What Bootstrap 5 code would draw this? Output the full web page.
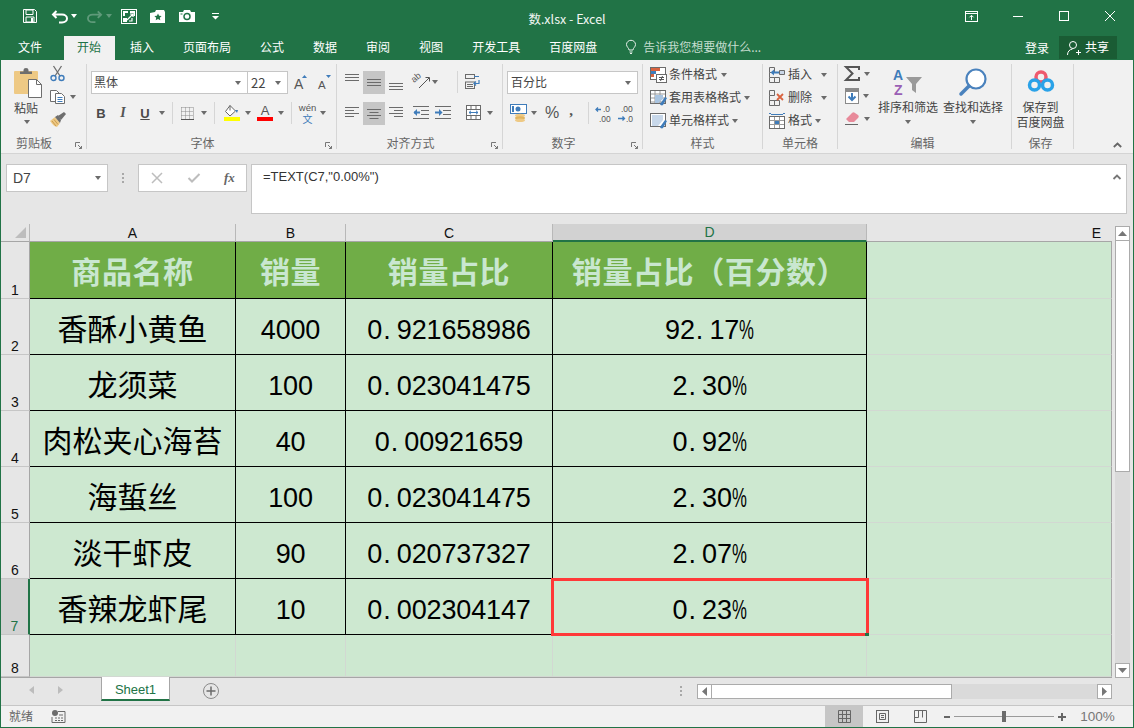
<!DOCTYPE html>
<html lang="zh-CN">
<head>
<meta charset="utf-8">
<title>数.xlsx - Excel</title>
<link href="https://cdn.jsdelivr.net/npm/bootstrap@5.3.0/dist/css/bootstrap.min.css" rel="stylesheet">
<style>
html,body{margin:0;height:728px;overflow:hidden;background:#e6e6e6}
body{font-family:"Noto Sans CJK SC","Liberation Sans",sans-serif;font-size:12px;line-height:1.2;color:#444}
svg{display:block;flex-shrink:0;overflow:visible}
.xl-win{width:1134px;height:728px;border:1px solid #217346;border-top:0;display:flex;flex-direction:column;background:#e6e6e6;overflow:hidden}
.ml1{margin-left:1px}.ml2{margin-left:2px}.ml3{margin-left:3px}.ml4{margin-left:4px}.ml5{margin-left:5px}.ml6{margin-left:6px}.ml7{margin-left:7px}.ml8{margin-left:8px}.ml9{margin-left:9px}.ml10{margin-left:10px}.ml11{margin-left:11px}.ml12{margin-left:12px}.ml13{margin-left:13px}.ml14{margin-left:14px}.ml15{margin-left:15px}.ml17{margin-left:17px}.ml19{margin-left:19px}.ml22{margin-left:22px}
.mt1{margin-top:1px}.mt2{margin-top:2px}.mt3{margin-top:3px}.mt4{margin-top:4px}.mt5{margin-top:5px}.mt6{margin-top:6px}.mt7{margin-top:7px}.mt8{margin-top:8px}.mt9{margin-top:9px}.mt10{margin-top:10px}
.xl-tri{width:0;height:0;border-left:3.5px solid transparent;border-right:3.5px solid transparent;border-top:4px solid #6b6b6b;flex-shrink:0}
.xl-title{height:36px;background:#217346;color:#fff;flex-shrink:0;margin-left:-1px;margin-right:-1px;padding-bottom:4px}
.xl-side{flex:1 1 0;min-width:0}
.xl-doc{font-size:12.5px;color:#f2f7f4;margin-top:4px}
.xl-tabs{height:24px;background:#217346;color:#fff;flex-shrink:0;margin-left:-1px;margin-right:-1px}
.xl-tabs .nav-link{padding:0 14px 0 13px;margin-right:2px;height:24px;line-height:22px;color:#fff;font-size:12px;border-radius:0}
.xl-tabs .nav-link.xl-on{background:#f1f1f1;color:#217346}
.xl-tabs .xl-first{margin-left:5px;margin-right:8px}
.xl-tell{color:#c5ddcf;margin-left:13px}
.xl-share{height:23px;width:58px;background:#1a5c34;color:#fff;margin-left:10px;margin-right:17px}
.xl-ribbon{height:94px;background:#f1f1f1;border-bottom:1px solid #d4d4d4;padding-top:4px;flex-shrink:0}
.xl-grp{height:85px;border-right:1px solid #d6d6d6;display:flex;flex-direction:column;position:relative;flex-shrink:0}
.xl-g1{width:86px}.xl-g2{width:250px}.xl-g3{width:166px}.xl-g4{width:140px}.xl-g5{width:120px}.xl-g6{width:75px}.xl-g7{width:174px}.xl-g8{width:62px;padding-right:4px}
.xl-gbody{height:71px;display:flex}
.xl-glabel{height:14px;line-height:16px;text-align:center;color:#666;font-size:12px}
.xl-lb1{padding-right:19px}.xl-lb2{padding-right:18px}.xl-lb3{padding-right:18px}.xl-lb4{padding-right:18px}.xl-lb7{padding-right:4px}
.xl-launch{position:absolute;right:4px;bottom:0}
.xl-combo{height:23px;background:#fff;border:1px solid #c6c6c6;display:flex;align-items:center;justify-content:space-between;font-size:12px;color:#444;padding:0 6px 0 2px}
.xl-font{width:157px}.xl-size{width:41px;margin-left:-1px;padding-left:3px}.xl-fmt{width:131px;padding-left:3px}
.xl-sepv{width:1px;height:22px;background:#d6d6d6;flex-shrink:0}
.xl-b{font:700 13px "Liberation Sans",sans-serif;width:12px;text-align:center;color:#4a4a4a}
.xl-i{font:italic 700 14px "Liberation Serif",serif;width:12px;text-align:center;color:#555}
.xl-u{font:700 13px "Liberation Sans",sans-serif;width:12px;text-align:center;color:#4a4a4a;text-decoration:underline}
.xl-hi{width:22px;height:23px;background:#c6c6c6;display:flex;align-items:center;justify-content:center}
.xl-line{height:23px;align-items:center;display:flex;white-space:nowrap;color:#444}
.xl-bigbtn{width:60px;display:flex;flex-direction:column;align-items:center;white-space:nowrap;color:#444}
.xl-svgt{font-family:"Liberation Sans",sans-serif}
.xl-fbar{height:70px;padding:10px 5px 0 5px;flex-shrink:0;align-items:flex-start}
.xl-name{width:102px;height:28px;background:#fff;border:1px solid #c6c6c6;padding:0 6px;font:14px "Liberation Sans",sans-serif;color:#444}
.xl-fbtns{width:109px;height:28px;background:#fff;border:1px solid #c6c6c6}
.xl-finput{width:876px;height:50px;margin-left:4px;background:#fff;border:1px solid #c6c6c6;padding:4px 4px 0 11px;font:13px "Liberation Sans",sans-serif;color:#333;position:relative}
.xl-body{height:454px;flex-shrink:0;overflow:hidden}
.xl-wrap{width:1111px;height:454px;overflow:hidden;border-bottom:1px solid #a6a6a6;flex-shrink:0}
.table.xl-sheet{margin:0;width:1111px;table-layout:fixed;border-collapse:separate;border-spacing:0;--bs-table-bg:transparent;--bs-table-color:#000;--bs-border-width:0}
.table.xl-sheet td,.table.xl-sheet th{padding:0;box-shadow:none;text-align:center;vertical-align:middle;font-weight:400;white-space:nowrap;overflow:visible}
.table.xl-sheet .xl-ch{height:18px;background:#e6e6e6;border-right:1px solid #b8b8b8;border-bottom:1px solid #a6a6a6;font:14px "Liberation Sans",sans-serif;color:#111;line-height:16px}
.table.xl-sheet .xl-ch.xl-sel{background:#d2d2d2;color:#217346;border-bottom:2px solid #217346}
.table.xl-sheet .xl-ch.xl-e{border-right:0;text-align:right;padding-right:11px;background:#e6e6e6}
.table.xl-sheet .xl-corner{position:relative;text-align:left;padding-left:14px}
.table.xl-sheet .xl-rh{background:#e6e6e6;border-right:1px solid #a6a6a6;border-bottom:1px solid #c6c6c6;font:14px "Liberation Sans",sans-serif;color:#111;vertical-align:bottom;line-height:15px}
.table.xl-sheet .xl-rh.xl-sel{background:#d2d2d2;color:#217346;border-right:2px solid #217346}
.table.xl-sheet .xl-d,.table.xl-sheet .xl-h{background:#cde8d0;border-right:1px solid #000;border-bottom:1px solid #000;font-family:"Noto Sans CJK SC",sans-serif;font-size:30px;line-height:34px;color:#000}
.table.xl-sheet .xl-h{background:#70ad47;color:#c9e7d0;font-weight:700;letter-spacing:.6px}
.table.xl-sheet .xl-n{font-family:"Liberation Sans",sans-serif;font-size:27px;letter-spacing:-.15px;padding-top:7px}
.xl-dot{display:inline-block;width:14.67px;text-align:left;padding-left:1px}
.xl-pc{display:inline-block;width:14.67px;transform:scaleX(.62);transform-origin:left center;text-align:left}
.table.xl-sheet .xl-g{background:#cde8d0;border-right:1px solid #d2d8d2;border-bottom:1px solid #d2d8d2}
.table.xl-sheet .xl-ge{background:#cde8d0;border-right:1px solid #a6a6a6;border-bottom:1px solid #d2d8d2}
.xl-r1{height:57px}.xl-rn{height:56px}.xl-r8{height:42px}
.xl-frame{position:absolute;left:-2px;right:-3px;top:-1px;bottom:-2px;border:3px solid #ff3838;pointer-events:none}
.xl-handle{position:absolute;right:-3px;bottom:-3px;width:4px;height:3px;background:#217346}
.xl-vs{width:21px;padding-left:3px;height:454px}
.xl-sb{width:15px;height:15px;background:#fff;border:1px solid #ababab;display:flex;align-items:center;justify-content:center;flex-shrink:0}
.xl-vthumb{width:15px;height:231px;background:#fff;border:1px solid #ababab;border-top:0}
.xl-vtrack{width:15px;flex:1;background:#dadada}
.xl-stabs{height:28px;flex-shrink:0;border-bottom:1px solid #c6c6c6}
.xl-tabb{width:69px;height:24px;background:#fff;border-bottom:2px solid #217346;border-left:1px solid #a6a6a6;border-right:1px solid #a6a6a6;margin-top:-1px;color:#217346;font:13px "Liberation Sans",sans-serif;line-height:25px;text-align:center}
.xl-hs{width:415px;height:15px;margin-top:6px}
.xl-hthumb{width:240px;height:15px;background:#fff;border:1px solid #ababab;border-left:0}
.xl-htrack{flex:1;background:#dadada;height:15px}
.xl-status{height:21px;background:#f1f1f1;flex-shrink:0;color:#666}
.xl-vbtn{width:38px;height:21px;display:flex;align-items:center;justify-content:center}
.xl-vbtn.xl-on{background:#c6c6c6}
.xl-zoomline{width:100px;height:1px;background:#9a9a9a;position:relative}
.xl-zoomk{position:absolute;left:48px;top:-5px;width:4px;height:11px;background:#6b6b6b}
.xl-pct{font:13.5px "Liberation Sans",sans-serif;color:#777;width:43px;text-align:center;margin-right:14px}
</style>
</head>
<body>
<div class="xl-win">

<!-- title bar -->
<div class="xl-title d-flex align-items-center">
  <div class="xl-side d-flex align-items-center">
    <svg style="margin-left:23px" width="14" height="14" viewBox="0 0 14 14"><path d="M.5.5h11l2 2v11H.5z" fill="none" stroke="#fff"/><path d="M3 1h7v4.5H3zM3 8h8v5H3z" fill="none" stroke="#fff"/><path d="M8 9h2v4H8z" fill="#fff"/></svg>
    <svg class="ml15" width="16" height="13" viewBox="0 0 16 13"><path d="M1 4.5h9c3 0 5 1.800 5 4s-2 4-5 4H7M4.500 1 1 4.500 4.500 8" fill="none" stroke="#fff" stroke-width="2"/></svg>
    <span class="xl-tri ml3" style="border-top-color:#fff"></span>
    <svg class="ml10" width="15" height="13" viewBox="0 0 16 13"><path d="M15 4.500H6c-3 0-5 1.800-5 4s2 4 5 4h3M11.500 1 15 4.500 11.500 8" fill="none" stroke="#5f9a7a" stroke-width="2"/></svg>
    <span class="xl-tri ml4" style="border-top-color:#5f9a7a"></span>
    <svg class="ml9" width="16" height="15" viewBox="0 0 16 15"><rect x=".5" y=".5" width="15" height="14" fill="none" stroke="#fff"/><path d="M2 2h5v2H4v3H2zM9 2h5v5h-1.500V4H9zM2 9h4v4H2z" fill="#fff"/><path d="M6 11l6-6M9 5h3v3M11 9v3H8" fill="none" stroke="#fff" stroke-width="1.200"/></svg>
    <svg class="ml13" width="16" height="13" viewBox="0 0 16 13"><path d="M0 3l5-1 1-2h8l1 2v11H0z" fill="#fff"/><path d="M8 3.500l1.100 2.300 2.500.3-1.800 1.700.5 2.500L8 9.100 5.700 10.300l.5-2.500L4.400 6.100l2.500-.3z" fill="#217346"/></svg>
    <svg class="ml13" width="16" height="12" viewBox="0 0 16 12"><path d="M0 2h4l1-2h6l1 2h4v10H0z" fill="#fff"/><circle cx="8" cy="6.500" r="3" fill="none" stroke="#217346" stroke-width="1.500"/><path d="M1.500 3.500h2v1h-2z" fill="#217346"/></svg>
    <svg class="ml17" width="7" height="7" viewBox="0 0 7 7"><path d="M0 0h7v1H0z M0 3h7L3.500 6.500z" fill="#fff"/></svg>
  </div>
  <div class="xl-doc">数.xlsx - Excel</div>
  <div class="xl-side d-flex align-items-center justify-content-end">
    <svg width="13" height="11" viewBox="0 0 13 11"><rect x=".5" y=".5" width="12" height="10" fill="none" stroke="#fff"/><path d="M.5 2.500h12M6.500 9V4.500M4.500 6.300l2-2 2 2" fill="none" stroke="#fff"/></svg>
    <svg style="margin-left:35px" width="10" height="1" viewBox="0 0 10 1"><path d="M0 .5h10" stroke="#fff"/></svg>
    <svg style="margin-left:36px" width="10" height="10" viewBox="0 0 10 10"><rect x=".5" y=".5" width="9" height="9" fill="none" stroke="#fff"/></svg>
    <svg style="margin-left:36px;margin-right:19px" width="10" height="10" viewBox="0 0 10 10"><path d="M0 0l10 10M10 0L0 10" stroke="#fff"/></svg>
  </div>
</div>

<!-- ribbon tabs -->
<div class="xl-tabs d-flex">
  <ul class="nav flex-nowrap">
    <li class="nav-item"><a class="nav-link xl-first" href="#">文件</a></li>
    <li class="nav-item"><a class="nav-link xl-on" href="#">开始</a></li>
    <li class="nav-item"><a class="nav-link" href="#">插入</a></li>
    <li class="nav-item"><a class="nav-link" href="#">页面布局</a></li>
    <li class="nav-item"><a class="nav-link" href="#">公式</a></li>
    <li class="nav-item"><a class="nav-link" href="#">数据</a></li>
    <li class="nav-item"><a class="nav-link" href="#">审阅</a></li>
    <li class="nav-item"><a class="nav-link" href="#">视图</a></li>
    <li class="nav-item"><a class="nav-link" href="#">开发工具</a></li>
    <li class="nav-item"><a class="nav-link" href="#">百度网盘</a></li>
  </ul>
  <div class="d-flex align-items-center xl-tell" style="height:22px">
    <svg width="10" height="14" viewBox="0 0 10 14"><path d="M3 10C3 8 .5 7 .5 4.500a4.500 4.200 0 0 1 9 0C9.500 7 7 8 7 10zM3.500 12h3M4 13.500h2" fill="none" stroke="#e6f0ea"/></svg>
    <span class="ml7">告诉我您想要做什么...</span>
  </div>
  <div class="ms-auto d-flex align-items-start">
    <span class="mt4" style="line-height:15px">登录</span>
    <div class="xl-share d-flex align-items-center justify-content-center">
      <svg width="14" height="14" viewBox="0 0 14 14"><circle cx="6" cy="4" r="3.500" fill="none" stroke="#fff"/><path d="M.5 14c0-3.500 2-5.500 5-6M9 11.500h5M11.500 9v5" fill="none" stroke="#fff"/></svg>
      <span class="ml4">共享</span>
    </div>
  </div>
</div>

<!-- ribbon -->
<div class="xl-ribbon d-flex">
  <!-- clipboard -->
  <div class="xl-grp xl-g1">
    <div class="xl-gbody">
      <div class="d-flex flex-column ml13 mt4" style="width:28px">
        <svg width="28" height="30" viewBox="0 0 28 30"><path d="M1 3h22a1 1 0 0 1 1 1v21a1 1 0 0 1-1 1H1a1 1 0 0 1-1-1V4a1 1 0 0 1 1-1z" fill="#eec984"/><path d="M6 6V3.500h3.500V2a2.500 2 0 0 1 5 0v1.500H18V6z" fill="#6e6e6e"/><path d="M14.500 11.500h8l5 5v13h-13z" fill="#fff" stroke="#6e6e6e"/><path d="M22.500 11.500v5h5" fill="none" stroke="#6e6e6e"/></svg>
        <span class="mt3" style="line-height:14px">粘贴</span>
        <span class="xl-tri mt5 ml10"></span>
      </div>
      <div class="d-flex flex-column ml8">
        <svg class="mt2" width="15" height="15" viewBox="0 0 15 15"><path d="M3.500 0l6.500 10M11.500 0L5 10" stroke="#6e6e6e" stroke-width="1.300" fill="none"/><circle cx="3.500" cy="12" r="2.500" fill="none" stroke="#3f7cba" stroke-width="1.400"/><circle cx="11.500" cy="12" r="2.500" fill="none" stroke="#3f7cba" stroke-width="1.400"/></svg>
        <div class="d-flex align-items-center mt9">
          <svg width="15" height="14" viewBox="0 0 15 14"><path d="M.5.500h6l3 3v8H.5z" fill="#fff" stroke="#6e6e6e"/><path d="M5.500 3.500h6l3 3v7h-9z" fill="#fff" stroke="#6e6e6e"/><path d="M7.500 7.500h5M7.500 9.500h5M7.500 11.500h5" stroke="#3f7cba"/></svg>
          <span class="xl-tri ml5"></span>
        </div>
        <svg class="mt8" width="16" height="15" viewBox="0 0 16 15"><path d="M0 9l5-4 5 6-3 4c-2 0-5-3-7-6z" fill="#eec984"/><path d="M5 5l3-2 3 5-1 3z" fill="#6e6e6e"/><path d="M8 4l6-4 2 2-5 6z" fill="#6e6e6e"/><path d="M2 9l4 5M4 7.500l4 5" stroke="#c99b50" fill="none"/></svg>
      </div>
    </div>
    <div class="xl-glabel xl-lb1">剪贴板</div>
    <svg class="xl-launch" width="7" height="7" viewBox="0 0 7 7"><path d="M.5 5V.5H5M3 3l3.500 3.500M6.500 4v2.500H4" fill="none" stroke="#777"/></svg>
  </div>

  <!-- font -->
  <div class="xl-grp xl-g2">
    <div class="xl-gbody flex-column">
      <div class="d-flex align-items-center mt7">
        <div class="xl-combo xl-font ml4"><span>黑体</span><span class="xl-tri"></span></div>
        <div class="xl-combo xl-size"><span style="font-size:13px">22</span><span class="xl-tri"></span></div>
        <svg class="ml6" width="13" height="17" viewBox="0 0 13 17"><text class="xl-svgt" x="0" y="15" font-size="14" fill="#555">A</text><path d="M8 4l2.500-3L13 4z" fill="#3f7cba"/></svg>
        <svg class="ml11" width="13" height="17" viewBox="0 0 13 17"><text class="xl-svgt" x="0" y="15" font-size="11.500" fill="#555">A</text><path d="M8 1l2.500 3L13 1z" fill="#3f7cba"/></svg>
      </div>
      <div class="d-flex align-items-center mt8">
        <span class="xl-b ml8">B</span><span class="xl-i ml10">I</span><span class="xl-u ml10">U</span>
        <span class="xl-tri ml8"></span>
        <span class="xl-sepv ml7"></span>
        <svg class="ml8" width="13" height="13" viewBox="0 0 13 13"><path d="M.5.500h12M.5 4.500h12M.5 8.500h12M.5.500v12M4.500.500v12M8.500.500v12M12.500.500v12" stroke="#8a8a8a" stroke-dasharray="1 1" fill="none"/><path d="M0 12.500h13" stroke="#555"/></svg>
        <span class="xl-tri ml7"></span>
        <span class="xl-sepv ml7"></span>
        <div class="d-flex flex-column ml9"><svg width="16" height="12" viewBox="0 0 16 12"><path d="M6 .5l5.500 5.500L6 11 1.500 6.500z" fill="#fff" stroke="#666"/><path d="M6 .5v5" stroke="#666"/><path d="M11 5h3l-1 3z" fill="#3f7cba"/></svg><span style="width:16px;height:4px;background:#ffff00;display:block"></span></div>
        <span class="xl-tri ml5"></span>
        <div class="d-flex flex-column ml6" style="width:16px"><span style="font:13px/12px 'Liberation Sans',sans-serif;text-align:center;color:#555;height:12px">A</span><span style="width:16px;height:4px;background:#ff0000;display:block"></span></div>
        <span class="xl-tri ml5"></span>
        <span class="xl-sepv ml7"></span>
        <div class="d-flex flex-column align-items-center ml8" style="width:15px"><span style="font:9.500px/10px 'Liberation Sans',sans-serif;color:#555">wén</span><span style="font-size:10px;line-height:11px;color:#3f7cba">文</span></div>
        <span class="xl-tri ml5"></span>
      </div>
    </div>
    <div class="xl-glabel xl-lb2">字体</div>
    <svg class="xl-launch" width="7" height="7" viewBox="0 0 7 7"><path d="M.5 5V.5H5M3 3l3.500 3.500M6.500 4v2.500H4" fill="none" stroke="#777"/></svg>
  </div>

  <!-- alignment -->
  <div class="xl-grp xl-g3">
    <div class="xl-gbody flex-column">
      <div class="d-flex align-items-start mt7">
        <svg class="ml8 mt3" width="14" height="8" viewBox="0 0 14 8"><path d="M0 .5h14M0 3.500h14M0 6.500h14" stroke="#6b6b6b"/></svg>
        <div class="xl-hi ml4"><svg width="14" height="8" viewBox="0 0 14 8"><path d="M0 .5h14M0 3.500h14M0 6.500h14" stroke="#6b6b6b"/></svg></div>
        <svg class="ml4" style="margin-top:12px" width="14" height="8" viewBox="0 0 14 8"><path d="M0 .5h14M0 3.500h14M0 6.500h14" stroke="#6b6b6b"/></svg>
        <svg class="ml10 mt3" width="18" height="15" viewBox="0 0 18 15"><text class="xl-svgt" x="0" y="0" font-size="9" fill="#555" transform="translate(1 9) rotate(-40)">ab</text><path d="M6 14L16 4M12.500 3.500H16.500V7.500" stroke="#555" fill="none"/></svg>
        <span class="xl-tri ml1 mt9"></span>
        <span class="xl-sepv ml19"></span>
        <svg class="ml7 mt3" width="15" height="15" viewBox="0 0 15 15"><rect x=".5" y=".5" width="9" height="4" fill="none" stroke="#6b6b6b"/><rect x=".5" y="8" width="9" height="6.500" fill="none" stroke="#6b6b6b"/><path d="M2 10.500h6M2 12.500h6" stroke="#6b6b6b"/><path d="M9 2.500h5M14 6v3.500h-5M11 7.500l-2 2 2 2" fill="none" stroke="#3f7cba" stroke-width="1.200"/></svg>
      </div>
      <div class="d-flex align-items-start mt8">
        <svg class="ml8" style="margin-top:5px" width="14" height="10" viewBox="0 0 14 10"><path d="M0 .5h14M0 3.500h9M0 6.500h14M0 9.500h9" stroke="#6b6b6b"/></svg>
        <div class="xl-hi ml4"><svg width="14" height="10" viewBox="0 0 14 10"><path d="M0 .5h14M2.500 3.500h9M0 6.500h14M2.500 9.500h9" stroke="#6b6b6b"/></svg></div>
        <svg class="ml4" style="margin-top:5px" width="14" height="10" viewBox="0 0 14 10"><path d="M0 .5h14M5 3.500h9M0 6.500h14M5 9.500h9" stroke="#6b6b6b"/></svg>
        <svg class="ml10" style="margin-top:4px" width="16" height="13" viewBox="0 0 16 13"><path d="M0 .5h16M8 4.500h8M8 8.500h8M0 12.500h16" stroke="#6b6b6b"/><path d="M1 6.500h6" stroke="#3f7cba" stroke-width="2"/><path d="M4 3L.5 6.500 4 10z" fill="#3f7cba"/></svg>
        <svg class="ml6" style="margin-top:4px" width="16" height="13" viewBox="0 0 16 13"><path d="M0 .5h16M8 4.500h8M8 8.500h8M0 12.500h16" stroke="#6b6b6b"/><path d="M0 6.500h5" stroke="#3f7cba" stroke-width="2"/><path d="M4 3l3.500 3.500L4 10z" fill="#3f7cba"/></svg>
        <svg class="ml15" style="margin-top:3px" width="15" height="15" viewBox="0 0 15 15"><rect x=".5" y=".5" width="14" height="14" fill="#fff" stroke="#6b6b6b"/><path d="M.5 4.500h14M.5 10.500h14M5 .500v4M10 .500v4M5 10.500v4M10 10.500v4" stroke="#6b6b6b"/><path d="M3 7.500h9M5 5.800L3 7.500l2 1.700M10 5.800l2 1.700-2 1.700" fill="none" stroke="#3f7cba"/></svg>
        <span class="xl-tri ml6 mt9"></span>
      </div>
    </div>
    <div class="xl-glabel xl-lb3">对齐方式</div>
    <svg class="xl-launch" width="7" height="7" viewBox="0 0 7 7"><path d="M.5 5V.5H5M3 3l3.500 3.500M6.500 4v2.500H4" fill="none" stroke="#777"/></svg>
  </div>

  <!-- number -->
  <div class="xl-grp xl-g4">
    <div class="xl-gbody flex-column">
      <div class="d-flex mt7"><div class="xl-combo xl-fmt ml4"><span>百分比</span><span class="xl-tri"></span></div></div>
      <div class="d-flex align-items-center mt8" style="height:22px">
        <svg class="ml7" width="17" height="18" viewBox="0 0 17 18"><rect x=".5" y=".5" width="16" height="9" fill="#fff" stroke="#3f7cba"/><circle cx="8" cy="5" r="2.500" fill="#3f7cba"/><path d="M2 2h2v6H2z" fill="#3f7cba"/><ellipse cx="10" cy="11.500" rx="5" ry="1.800" fill="#eec984"/><ellipse cx="10" cy="14" rx="5" ry="1.800" fill="#e0b45f"/><ellipse cx="10" cy="16.200" rx="5" ry="1.800" fill="#eec984"/></svg>
        <span class="xl-tri ml4"></span>
        <span class="ml8" style="font:16px 'Liberation Sans',sans-serif;color:#555">%</span>
        <span class="ml10" style="font:700 15px 'Liberation Serif',serif;color:#555;width:8px;margin-top:-5px">,</span>
        <span class="xl-sepv ml11"></span>
        <svg class="ml7" width="15" height="15" viewBox="0 0 15 15"><text class="xl-svgt" x="7" y="6" font-size="8.500" fill="#555">.0</text><text class="xl-svgt" x="3" y="16" font-size="8.500" fill="#555">.00</text><path d="M0 3.500h5M2 1.500L0 3.500l2 2" stroke="#3f7cba" stroke-width="1.300" fill="none"/></svg>
        <svg class="ml7" width="15" height="15" viewBox="0 0 15 15"><text class="xl-svgt" x="3" y="6" font-size="8.500" fill="#555">.00</text><text class="xl-svgt" x="8" y="16" font-size="8.500" fill="#555">.0</text><path d="M0 12.500h6M4.500 10.500l2 2-2 2" stroke="#3f7cba" stroke-width="1.300" fill="none"/></svg>
      </div>
    </div>
    <div class="xl-glabel xl-lb4">数字</div>
    <svg class="xl-launch" width="7" height="7" viewBox="0 0 7 7"><path d="M.5 5V.5H5M3 3l3.500 3.500M6.500 4v2.500H4" fill="none" stroke="#777"/></svg>
  </div>

  <!-- styles -->
  <div class="xl-grp xl-g5">
    <div class="xl-gbody flex-column">
      <div class="xl-line ml7" style="margin-top:-1px">
        <svg width="17" height="16" viewBox="0 0 17 16"><rect x=".5" y=".5" width="15" height="12" fill="#fff" stroke="#6b6b6b"/><path d="M1 1h9v3H1z" fill="#d9633f"/><path d="M1 4h5v3H1z" fill="#3f7cba"/><path d="M1 7h3v3H1z" fill="#d9633f"/><rect x="6.500" y="7.500" width="10" height="8" fill="#fff" stroke="#6b6b6b"/><path d="M9 10.500h5M9 12.500h5M12.500 9l-2 5" stroke="#555" fill="none"/></svg>
        <span class="ml2">条件格式</span><span class="xl-tri ml4"></span>
      </div>
      <div class="xl-line ml7">
        <svg width="17" height="16" viewBox="0 0 17 16"><rect x=".5" y=".5" width="15" height="13" fill="#fff" stroke="#6b6b6b"/><path d="M1 4h14M1 8h14M1 12h14M5 1v12M10 1v12" stroke="#9a9a9a"/><path d="M5 5h8v4l-5 4H5z" fill="#a9c4e0"/><path d="M10 14l5-7 2 1-4 7c-1 1-3 0-3-1z" fill="#3f7cba"/></svg>
        <span class="ml2">套用表格格式</span><span class="xl-tri ml3"></span>
      </div>
      <div class="xl-line ml7">
        <svg width="17" height="16" viewBox="0 0 17 16"><rect x=".5" y=".5" width="15" height="13" fill="#fff" stroke="#6b6b6b"/><path d="M2 2h11v5L8 13H2z" fill="#c8d8ea"/><path d="M10 14l5-7 2 1-4 7c-1 1-3 0-3-1z" fill="#3f7cba"/></svg>
        <span class="ml2">单元格样式</span><span class="xl-tri ml3"></span>
      </div>
    </div>
    <div class="xl-glabel">样式</div>
  </div>

  <!-- cells -->
  <div class="xl-grp xl-g6">
    <div class="xl-gbody flex-column">
      <div class="xl-line ml6" style="margin-top:-1px">
        <svg width="16" height="16" viewBox="0 0 16 16"><path d="M.5.500h5v5h-5zM.5 10.500h5v5h-5zM5.500 10.500h5v5h-5zM.5 5.500v5" fill="none" stroke="#6b6b6b"/><path d="M3 5.500h7" stroke="#3f7cba" stroke-width="2"/><path d="M5 2.500L1.500 5.500 5 8.500z" fill="#3f7cba"/><path d="M10.500 3.500h5v4h-5z" fill="#c9d6e6" stroke="#6b6b6b"/></svg>
        <span class="ml3">插入</span><span class="xl-tri ml9"></span>
      </div>
      <div class="xl-line ml6">
        <svg width="16" height="16" viewBox="0 0 16 16"><path d="M.5.500h5v5h-5zM.5 10.500h5v5h-5zM5.500 10.500h5v5h-5zM.5 5.500v5" fill="none" stroke="#6b6b6b"/><path d="M8 4l6 6M14 4l-6 6" stroke="#d9633f" stroke-width="1.800"/></svg>
        <span class="ml3">删除</span><span class="xl-tri ml9"></span>
      </div>
      <div class="xl-line ml6">
        <svg width="16" height="16" viewBox="0 0 16 16"><path d="M0 .5h2M14 .5h2M2 1.500h12" stroke="#3f7cba"/><rect x=".5" y="3.500" width="15" height="12" fill="#fff" stroke="#6b6b6b"/><path d="M1 7.500h14M1 11.500h14M5.500 4v11M10.500 4v11" stroke="#9a9a9a"/><path d="M6 8h4v3H6z" fill="#3f7cba"/></svg>
        <span class="ml3">格式</span><span class="xl-tri ml3"></span>
      </div>
    </div>
    <div class="xl-glabel">单元格</div>
  </div>

  <!-- editing -->
  <div class="xl-grp xl-g7">
    <div class="xl-gbody">
      <div class="d-flex flex-column ml6 mt2">
        <div class="d-flex align-items-center">
          <svg width="16" height="15" viewBox="0 0 16 15"><path d="M15 4V1H2l6.500 6.500L2 14h13v-3" fill="none" stroke="#555" stroke-width="2"/></svg>
          <span class="xl-tri ml4"></span>
        </div>
        <div class="d-flex align-items-center mt7">
          <svg class="ml1" width="14" height="16" viewBox="0 0 14 16"><rect x=".5" y=".5" width="13" height="15" fill="#fff" stroke="#8a8a8a"/><path d="M1 1h12v3H1z" fill="#8a8a8a"/><path d="M7 5v7M3.500 8.500L7 12l3.500-3.500" fill="none" stroke="#3f7cba" stroke-width="2"/></svg>
          <span class="xl-tri ml4"></span>
        </div>
        <div class="d-flex align-items-center mt8">
          <svg class="ml1" width="15" height="13" viewBox="0 0 15 13"><path d="M1 7l6-6c1-1 2-1 3 0l3 2c1 1 1 2 0 3l-4 4H4z" fill="#e88a9a"/><path d="M0 12.500h13" stroke="#666"/></svg>
          <span class="xl-tri ml4"></span>
        </div>
      </div>
      <div class="xl-bigbtn" style="margin-left:8px">
        <svg class="mt4" width="30" height="28" viewBox="0 0 30 28"><text class="xl-svgt" x="0" y="12" font-size="14" font-weight="700" fill="#3f7cba">A</text><text class="xl-svgt" x="1" y="27" font-size="14" font-weight="700" fill="#9a5fb5">Z</text><path d="M13 9h16l-6 7v9l-4-3v-6z" fill="#9a9a9a"/></svg>
        <span class="mt4" style="line-height:14px">排序和筛选</span>
        <span class="xl-tri mt6"></span>
      </div>
      <div class="xl-bigbtn ml5">
        <svg class="mt4" width="28" height="28" viewBox="0 0 28 28"><circle cx="17" cy="11" r="9.500" fill="#fff" stroke="#4a82bd" stroke-width="2.200"/><path d="M10 18L2 26" stroke="#4a82bd" stroke-width="3.500" stroke-linecap="round"/></svg>
        <span class="mt4" style="line-height:14px">查找和选择</span>
        <span class="xl-tri mt6"></span>
      </div>
    </div>
    <div class="xl-glabel xl-lb7">编辑</div>
  </div>

  <!-- save -->
  <div class="xl-grp xl-g8">
    <div class="xl-gbody flex-column align-items-center">
      <svg class="mt6" width="26" height="22" viewBox="0 0 26 22"><circle cx="13" cy="7" r="5" fill="none" stroke="#ef5a6e" stroke-width="3.500"/><circle cx="6.500" cy="15" r="5" fill="none" stroke="#2aa2e8" stroke-width="3.500"/><circle cx="19.500" cy="15" r="5" fill="none" stroke="#2aa2e8" stroke-width="3.500"/></svg>
      <span class="mt7 text-nowrap" style="line-height:15px">保存到</span>
      <span class="text-nowrap" style="line-height:15px">百度网盘</span>
    </div>
    <div class="xl-glabel">保存</div>
  </div>
  <div class="flex-grow-1 d-flex justify-content-end align-items-end">
    <svg style="margin-right:11px;margin-bottom:5px" width="9" height="6" viewBox="0 0 9 6"><path d="M.8 5L4.500 1.500 8.200 5" fill="none" stroke="#666" stroke-width="1.800"/></svg>
  </div>
</div>

<!-- formula bar -->
<div class="d-flex xl-fbar">
  <div class="xl-name d-flex align-items-center justify-content-between"><span>D7</span><span class="xl-tri"></span></div>
  <svg class="ml13" style="margin-top:9px" width="3" height="11" viewBox="0 0 3 11"><path d="M1 0h2v2H1zM1 4h2v2H1zM1 8h2v2H1z" fill="#a8a8a8"/></svg>
  <div class="xl-fbtns d-flex align-items-center ml14">
    <svg style="margin-left:13px" width="10" height="10" viewBox="0 0 10 10"><path d="M0 0l10 10M10 0L0 10" stroke="#bdbdbd" stroke-width="1.500"/></svg>
    <svg style="margin-left:26px" width="12" height="10" viewBox="0 0 12 10"><path d="M.5 5L4 8.500 11.500 1" fill="none" stroke="#bdbdbd" stroke-width="2"/></svg>
    <span style="margin-left:24px;font:italic 700 13px 'Liberation Serif',serif;color:#666">fx</span>
  </div>
  <div class="xl-finput">=TEXT(C7,"0.00%")
    <svg class="position-absolute" style="right:5px;top:9px" width="8" height="6" viewBox="0 0 8 6"><path d="M.5 5L4 1.500 7.500 5" fill="none" stroke="#777" stroke-width="1.800"/></svg>
  </div>
</div>

<!-- sheet -->
<div class="d-flex xl-body">
  <div class="xl-wrap">
    <table class="table xl-sheet">
      <colgroup><col style="width:29px"><col style="width:206px"><col style="width:110px"><col style="width:207px"><col style="width:314px"><col style="width:245px"></colgroup>
      <thead>
        <tr>
          <th class="xl-ch xl-corner"><svg width="11" height="11" viewBox="0 0 11 11"><path d="M11 0v11H0z" fill="#bdbdbd"/></svg></th>
          <th class="xl-ch">A</th><th class="xl-ch">B</th><th class="xl-ch">C</th><th class="xl-ch xl-sel">D</th><th class="xl-ch xl-e">E</th>
        </tr>
      </thead>
      <tbody>
        <tr class="xl-r1"><td class="xl-rh">1</td><td class="xl-h">商品名称</td><td class="xl-h">销量</td><td class="xl-h">销量占比</td><td class="xl-h">销量占比（百分数）</td><td class="xl-ge"></td></tr>
        <tr class="xl-rn"><td class="xl-rh">2</td><td class="xl-d">香酥小黄鱼</td><td class="xl-d xl-n">4000</td><td class="xl-d xl-n">0<span class="xl-dot">.</span>921658986</td><td class="xl-d xl-n">92<span class="xl-dot">.</span>17<span class="xl-pc">%</span></td><td class="xl-ge"></td></tr>
        <tr class="xl-rn"><td class="xl-rh">3</td><td class="xl-d">龙须菜</td><td class="xl-d xl-n">100</td><td class="xl-d xl-n">0<span class="xl-dot">.</span>023041475</td><td class="xl-d xl-n">2<span class="xl-dot">.</span>30<span class="xl-pc">%</span></td><td class="xl-ge"></td></tr>
        <tr class="xl-rn"><td class="xl-rh">4</td><td class="xl-d">肉松夹心海苔</td><td class="xl-d xl-n">40</td><td class="xl-d xl-n">0<span class="xl-dot">.</span>00921659</td><td class="xl-d xl-n">0<span class="xl-dot">.</span>92<span class="xl-pc">%</span></td><td class="xl-ge"></td></tr>
        <tr class="xl-rn"><td class="xl-rh">5</td><td class="xl-d">海蜇丝</td><td class="xl-d xl-n">100</td><td class="xl-d xl-n">0<span class="xl-dot">.</span>023041475</td><td class="xl-d xl-n">2<span class="xl-dot">.</span>30<span class="xl-pc">%</span></td><td class="xl-ge"></td></tr>
        <tr class="xl-rn"><td class="xl-rh">6</td><td class="xl-d">淡干虾皮</td><td class="xl-d xl-n">90</td><td class="xl-d xl-n">0<span class="xl-dot">.</span>020737327</td><td class="xl-d xl-n">2<span class="xl-dot">.</span>07<span class="xl-pc">%</span></td><td class="xl-ge"></td></tr>
        <tr class="xl-rn"><td class="xl-rh xl-sel">7</td><td class="xl-d">香辣龙虾尾</td><td class="xl-d xl-n">10</td><td class="xl-d xl-n">0<span class="xl-dot">.</span>002304147</td><td class="xl-d xl-n position-relative">0<span class="xl-dot">.</span>23<span class="xl-pc">%</span><div class="xl-frame"><div class="xl-handle"></div></div></td><td class="xl-ge"></td></tr>
        <tr class="xl-r8"><td class="xl-rh">8</td><td class="xl-g"></td><td class="xl-g"></td><td class="xl-g"></td><td class="xl-g"></td><td class="xl-ge"></td></tr>
      </tbody>
    </table>
  </div>
  <div class="xl-vs d-flex flex-column">
    <div class="xl-sb mt2"><svg width="9" height="5" viewBox="0 0 9 5"><path d="M4.500 0L9 5H0z" fill="#777"/></svg></div>
    <div class="xl-vthumb"></div>
    <div class="xl-vtrack"></div>
    <div class="xl-sb"><svg width="9" height="5" viewBox="0 0 9 5"><path d="M4.500 5L9 0H0z" fill="#777"/></svg></div>
  </div>
</div>

<!-- sheet tabs -->
<div class="d-flex xl-stabs">
  <svg style="margin-left:28px;margin-top:8px" width="5" height="8" viewBox="0 0 5 8"><path d="M5 0v8L0 4z" fill="#bcbcbc"/></svg>
  <svg style="margin-left:24px;margin-top:8px" width="5" height="8" viewBox="0 0 5 8"><path d="M0 0v8l5-4z" fill="#bcbcbc"/></svg>
  <div class="xl-tabb" style="margin-left:38px">Sheet1</div>
  <svg style="margin-left:33px;margin-top:5px" width="16" height="16" viewBox="0 0 16 16"><circle cx="8" cy="8" r="7.500" fill="none" stroke="#8a8a8a"/><path d="M3.500 8h9M8 3.500v9" stroke="#6b6b6b" stroke-width="1.500"/></svg>
  <svg style="margin-left:461px;margin-top:8px" width="3" height="11" viewBox="0 0 3 11"><path d="M0 0h2v2H0zM0 4h2v2H0zM0 8h2v2H0z" fill="#a8a8a8"/></svg>
  <div class="xl-hs d-flex ml14">
    <div class="xl-sb"><svg width="5" height="9" viewBox="0 0 5 9"><path d="M0 4.500L5 0v9z" fill="#777"/></svg></div>
    <div class="xl-hthumb"></div>
    <div class="xl-htrack"></div>
    <div class="xl-sb"><svg width="5" height="9" viewBox="0 0 5 9"><path d="M5 4.500L0 0v9z" fill="#777"/></svg></div>
  </div>
</div>

<!-- status bar -->
<div class="d-flex align-items-center xl-status">
  <span class="ml8">就绪</span>
  <svg style="margin-left:19px" width="13" height="13" viewBox="0 0 13 13"><circle cx="3" cy="3" r="3" fill="#6b6b6b"/><path d="M6 1.500h7v11H0V7" fill="none" stroke="#6b6b6b"/><path d="M3 8h2M6 8h2M9 8h2M3 10.500h2M6 10.500h2M9 10.500h2M7 5h4" stroke="#6b6b6b"/></svg>
  <div class="ms-auto d-flex align-items-center">
    <div class="xl-vbtn xl-on"><svg width="13" height="13" viewBox="0 0 13 13"><path d="M.5.500h12v12H.5zM.5 4.500h12M.5 8.500h12M4.500.500v12M8.500.500v12" fill="none" stroke="#666"/></svg></div>
    <div class="xl-vbtn"><svg width="13" height="13" viewBox="0 0 13 13"><rect x=".5" y=".5" width="12" height="12" fill="none" stroke="#666"/><path d="M3.500 3.500h6v6h-6zM5 5.500h3M5 7.500h3" fill="none" stroke="#666"/></svg></div>
    <div class="xl-vbtn"><svg width="13" height="13" viewBox="0 0 13 13"><path d="M.5.500h12v12H.5zM.5 7.500h4M4.500.500v7M8.500.500v7" fill="none" stroke="#666"/></svg></div>
    <svg class="ml5" width="6" height="2" viewBox="0 0 6 2"><path d="M0 0h6v2H0z" fill="#666"/></svg>
    <div class="xl-zoomline ml4"><span class="xl-zoomk"></span></div>
    <svg class="ml4" width="8" height="8" viewBox="0 0 8 8"><path d="M3 0h2v3h3v2H5v3H3V5H0V3h3z" fill="#666"/></svg>
    <div class="xl-pct ml10">100%</div>
  </div>
</div>

</div>
<script src="https://cdn.jsdelivr.net/npm/bootstrap@5.3.0/dist/js/bootstrap.bundle.min.js"></script>
</body>
</html>
